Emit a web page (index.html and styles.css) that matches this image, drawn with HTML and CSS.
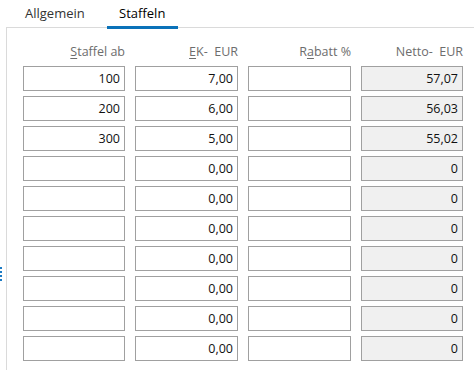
FILE: index.html
```html
<!DOCTYPE html>
<html lang="de">
<head>
    <meta charset="UTF-8">
    <meta name="viewport" content="width=device-width, initial-scale=1.0">
    <title>Staffeln</title>
    <link rel="stylesheet" href="styles.css">
</head>
<body>
    <div class="grip">
        <span></span><span></span><span></span><span></span>
    </div>
    <div class="tabs">
        <div class="tab">Allgemein</div>
        <div class="tab active">Staffeln</div>
    </div>
    <div class="panel">
        <div class="grid" id="grid">
            <div class="head"><u>S</u>taffel ab</div>
            <div class="head"><u>E</u>K-&nbsp; EUR</div>
            <div class="head">R<u>a</u>batt %</div>
            <div class="head">Netto-&nbsp; EUR</div>
        </div>
    </div>

    <script>
        const rows = [
            ['100', '7,00', '', '57,07'],
            ['200', '6,00', '', '56,03'],
            ['300', '5,00', '', '55,02'],
            ['', '0,00', '', '0'],
            ['', '0,00', '', '0'],
            ['', '0,00', '', '0'],
            ['', '0,00', '', '0'],
            ['', '0,00', '', '0'],
            ['', '0,00', '', '0'],
            ['', '0,00', '', '0']
        ];

        const grid = document.getElementById('grid');
        rows.forEach(function(row) {
            row.forEach(function(value, i) {
                const field = document.createElement('div');
                field.className = i === 3 ? 'field readonly' : 'field';
                field.textContent = value;
                grid.appendChild(field);
            });
        });
    </script>
</body>
</html>
```
FILE: styles.css
```css
body {
    margin: 0;
    font-family: "Open Sans", "Noto Sans", sans-serif;
    font-size: 12.5px;
    background-color: #fff;
    color: #000;
    position: relative;
    height: 371px;
    overflow: hidden;
}
.grip {
    position: absolute;
    left: 0;
    top: 267px;
    display: flex;
    flex-direction: column;
    gap: 2px;
}
.grip span {
    display: block;
    width: 2px;
    height: 2px;
    background-color: #1c7bc4;
}
.tabs {
    display: flex;
    height: 28px;
    padding-left: 13px;
    font-size: 13px;
}
.tab {
    padding: 0 12px;
    line-height: 27px;
    color: #333;
}
.tab.active {
    margin-left: 10px;
    width: 71px;
    padding: 0;
    box-sizing: border-box;
    text-align: center;
    color: #000;
    border-bottom: 3px solid #0a72b9;
    height: 29px;
    line-height: 26px;
}
.panel {
    margin-left: 6px;
    margin-top: -1px;
    border-top: 1px solid #dadada;
    border-left: 1px solid #dadada;
    height: 343px;
    box-sizing: border-box;
    padding: 16px 0 0 16px;
}
.grid {
    display: grid;
    grid-template-columns: 102px 103px 103px 102px;
    column-gap: 10px;
    row-gap: 5px;
}
.head {
    text-align: right;
    color: #6d6d6d;
    line-height: 16px;
    height: 17px;
    white-space: nowrap;
}
.head u {
    text-underline-offset: 2px;
}
.field {
    height: 25px;
    box-sizing: border-box;
    border: 1px solid #a0a0a0;
    text-align: right;
    padding-right: 4px;
    line-height: 23px;
    color: #111;
}
.field.readonly {
    background-color: #f0f0f0;
}
```
